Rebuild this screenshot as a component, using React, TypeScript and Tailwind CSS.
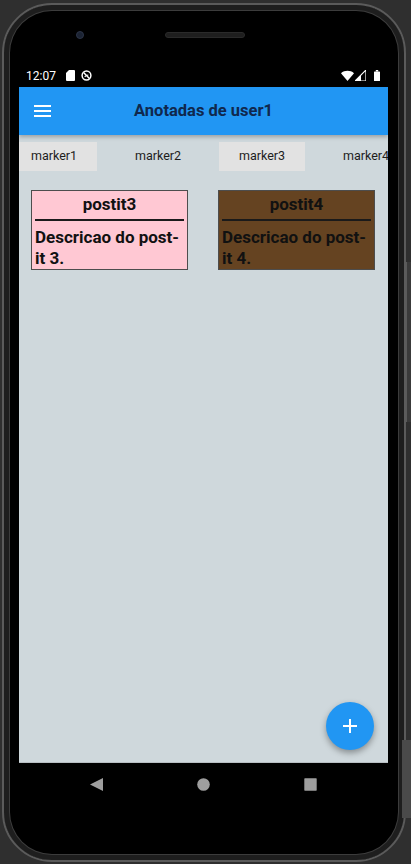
import React from 'react';

const markers = ['marker1', 'marker2', 'marker3', 'marker4'];

const postits = [
  { title: 'postit3', text: 'Descricao do post-it 3.', color: 'bg-[#ffc8d3]' },
  { title: 'postit4', text: 'Descricao do post-it 4.', color: 'bg-[#654321]' },
];

const StatusBar: React.FC = () => (
  <div className="h-[23px] bg-black flex items-center justify-between pl-[7px] pr-[8px] text-white">
    <div className="flex items-center">
      <span className="text-[12px] leading-none">12:07</span>
      <svg className="ml-[10px]" width="9" height="11" viewBox="0 0 9 11">
        <path d="M3 0H8a1 1 0 0 1 1 1v9a1 1 0 0 1-1 1H1a1 1 0 0 1-1-1V3z" fill="white" />
      </svg>
      <svg className="ml-[6px]" width="11" height="11" viewBox="0 0 12 12">
        <circle cx="6" cy="6" r="4.8" fill="none" stroke="white" strokeWidth="1.6" />
        <path d="M2.8 2.8l6.4 6.4" stroke="white" strokeWidth="1.6" />
        <path d="M4 7.5c1-1.2 2.5-2 4-2" stroke="white" strokeWidth="1.2" fill="none" />
      </svg>
    </div>
    <div className="flex items-center gap-[1px]">
      <svg width="13" height="11" viewBox="0 0 13 11">
        <path d="M0 3.2C3.6 0 9.4 0 13 3.2L6.5 11z" fill="white" />
      </svg>
      <svg width="11" height="11" viewBox="0 0 11 11">
        <path d="M11 0V11H0z" fill="none" stroke="white" strokeWidth="1.2" />
        <path d="M6 5V11H0z" fill="white" />
      </svg>
      <svg className="ml-[7px]" width="6" height="11" viewBox="0 0 6 11">
        <rect x="1.8" y="0" width="2.4" height="1.5" fill="white" />
        <rect x="0" y="1.4" width="6" height="9.6" rx="0.6" fill="white" />
      </svg>
    </div>
  </div>
);

const AppBar: React.FC = () => (
  <div className="h-[48px] bg-[#2196f3] grid grid-cols-[48px_1fr_48px] items-center shadow-[0_2px_4px_rgba(0,0,0,0.25)] relative z-10">
    <div className="pl-[15px] flex flex-col gap-[3px]">
      <span className="block w-[17px] h-[2px] bg-white" />
      <span className="block w-[17px] h-[2px] bg-white" />
      <span className="block w-[17px] h-[2px] bg-white" />
    </div>
    <h1 className="text-center text-[16.5px] font-bold text-[#10284d]">Anotadas de user1</h1>
    <div />
  </div>
);

const Content: React.FC = () => (
  <div className="relative h-[628px] bg-[#cfd8dc] overflow-hidden border-b border-[#b8bfc3]">
    <div className="mt-[7px] h-[29px] flex -ml-[17px]">
      {markers.map((m, i) => (
        <div
          key={m}
          className={`shrink-0 w-[86px] mx-[9px] h-[29px] flex items-center justify-center text-[12.5px] text-[#1d1d1d] ${
            i % 2 === 0 ? 'bg-[#e2e2e2]' : ''
          }`}
        >
          {m}
        </div>
      ))}
    </div>

    <div className="mt-[19px] grid grid-cols-2 gap-[30px] pl-[12px] pr-[13px]">
      {postits.map((p) => (
        <div key={p.title} className={`h-[80px] border border-[#4d4d4d] ${p.color}`}>
          <div className="h-[28px] flex items-center justify-center text-[17px] font-bold text-[#111]">
            {p.title}
          </div>
          <div className="mx-[3px] h-[2px] bg-[#1a1a1a]" />
          <p className="pt-[6px] pl-[3px] text-[17px] leading-[21px] font-bold text-[#111]">{p.text}</p>
        </div>
      ))}
    </div>

    <button className="absolute right-[14px] bottom-[12px] w-12 h-12 rounded-full bg-[#2196f3] shadow-[0_3px_6px_rgba(0,0,0,0.35)] flex items-center justify-center">
      <svg width="14" height="14" viewBox="0 0 14 14">
        <path d="M7 0v14M0 7h14" stroke="white" strokeWidth="2" />
      </svg>
    </button>
  </div>
);

const NavBar: React.FC = () => (
  <div className="h-[42px] bg-black flex items-center justify-center gap-[94px]">
    <svg width="13" height="13" viewBox="0 0 13 13">
      <path d="M13 0V13L0 6.5z" fill="#9e9e9e" />
    </svg>
    <svg width="13" height="13" viewBox="0 0 13 13">
      <circle cx="6.5" cy="6.5" r="6.3" fill="#9e9e9e" />
    </svg>
    <svg width="13" height="13" viewBox="0 0 13 13">
      <rect x="0.3" y="0.3" width="12.4" height="12.4" rx="0.6" fill="#9e9e9e" />
    </svg>
  </div>
);

const App: React.FC = () => {
  return (
    <div className="relative w-[411px] h-[864px] bg-[#2f2f2f] overflow-hidden pt-[3px] pl-[2px] font-['Roboto',_'Liberation_Sans',_sans-serif]">
      <div className="absolute right-0 top-[262px] w-[5px] h-[160px] bg-[#3a3a3a] border-l border-[#5a5a5a]" />
      <div className="absolute right-0 top-[740px] w-[9px] h-[78px] bg-[#4a4a4a]" />
      <div className="w-[404px] h-[859px] rounded-[50px] border-2 border-[#5b5b5b] bg-black shadow-[inset_0_0_0_5px_#1e1e1e,inset_0_0_0_6px_#3c3c3c] pl-[15px] pr-[16px] flex flex-col">
        <div className="h-[59px] flex items-center pl-[57px]">
          <div className="w-[8px] h-[8px] rounded-full bg-[#1b2333] border border-[#2c3447]" />
          <div className="ml-[81px] w-[80px] h-[6px] rounded-full bg-[#1e1e1e] border border-[#2a2a2a]" />
        </div>
        <StatusBar />
        <AppBar />
        <Content />
        <NavBar />
      </div>
    </div>
  );
};

export default App;
